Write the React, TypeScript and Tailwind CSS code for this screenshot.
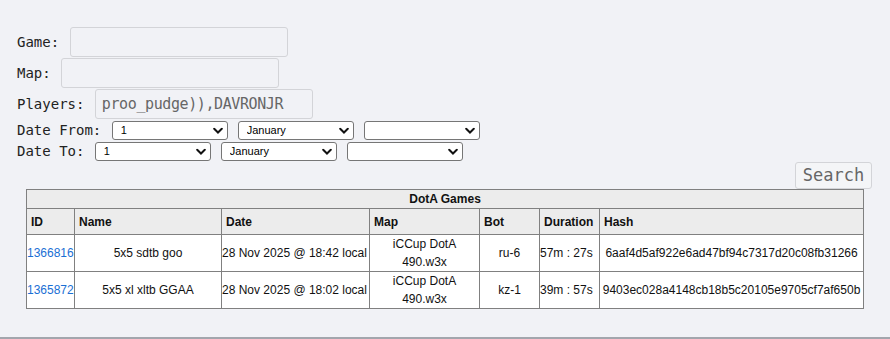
const mono = "font-['DejaVu_Sans_Mono',monospace]";
const arial = "font-['Liberation_Sans',Arial,sans-serif]";

const days = Array.from({ length: 31 }, (_, i) => String(i + 1));
const months = [
  "January", "February", "March", "April", "May", "June",
  "July", "August", "September", "October", "November", "December",
];

const games = [
  {
    id: "1366816",
    name: "5x5 sdtb goo",
    date: "28 Nov 2025 @ 18:42 local",
    map: ["iCCup DotA", "490.w3x"],
    bot: "ru-6",
    duration: "57m : 27s",
    hash: "6aaf4d5af922e6ad47bf94c7317d20c08fb31266",
  },
  {
    id: "1365872",
    name: "5x5 xl xltb GGAA",
    date: "28 Nov 2025 @ 18:02 local",
    map: ["iCCup DotA", "490.w3x"],
    bot: "kz-1",
    duration: "39m : 57s",
    hash: "9403ec028a4148cb18b5c20105e9705cf7af650b",
  },
];

const Chevron = () => (
  <svg
    className="pointer-events-none absolute right-[5px] top-1/2 -translate-y-1/2"
    width="10"
    height="7"
    viewBox="0 0 10 7"
  >
    <path d="M1.2 1.3 L5 5 L8.8 1.3" fill="none" stroke="#111" strokeWidth="2" strokeLinecap="round" />
  </svg>
);

const Select = ({ options, value }: { options: string[]; value?: string }) => (
  <div className="relative ml-[2px] mr-[8px] inline-flex w-[116px]">
    <select
      defaultValue={value ?? ""}
      className={`${arial} h-[19px] w-full appearance-none rounded-[3px] border border-[#767676] bg-white pl-[8px] text-[11px] leading-[17px] text-black`}
    >
      {value === undefined && <option value=""></option>}
      {options.map((o) => (
        <option key={o}>{o}</option>
      ))}
    </select>
    <Chevron />
  </div>
);

const TextField = ({ value }: { value?: string }) => (
  <input
    defaultValue={value}
    className={`${mono} ml-[2px] h-[30px] w-[218px] rounded-[3px] border border-[#d3d4d8] bg-[#f1f2f6] px-[6px] py-0 text-[15px] leading-[28px] tracking-[-0.4px] text-[#666] outline-none`}
  />
);

export default function App() {
  return (
    <div className={`${mono} h-[339px] border-b-2 border-[#a3a6ad] bg-[#f1f2f6] text-[14px] text-[#222]`}>
      <div className="px-[17px] pt-[27px]">
        <div className="flex h-[31px] items-start">
          <span className="whitespace-pre leading-[30px]">Game: </span>
          <TextField />
        </div>
        <div className="flex h-[31px] items-start">
          <span className="whitespace-pre leading-[30px]">Map: </span>
          <TextField />
        </div>
        <div className="flex h-[31px] items-start">
          <span className="whitespace-pre leading-[30px]">Players: </span>
          <TextField value="proo_pudge)),DAVRONJR" />
        </div>
        <div className="flex h-[21px] items-center">
          <span className="whitespace-pre">Date From: </span>
          <Select options={days} value="1" />
          <Select options={months} value="January" />
          <Select options={[]} />
        </div>
        <div className="flex h-[21px] items-center">
          <span className="whitespace-pre">Date To: </span>
          <Select options={days} value="1" />
          <Select options={months} value="January" />
          <Select options={[]} />
        </div>
      </div>
      <div className="flex justify-end pr-[18px]">
        <button className="h-[27px] w-[77px] rounded-[3px] border border-[#d3d4d8] bg-[#f4f5f7] text-[17px] text-[#666]">
          Search
        </button>
      </div>
      <div className="pl-[26px]">
        <table className={`${arial} w-[837px] table-fixed border-collapse border border-[#808080] text-[12px] text-[#111]`}>
          <colgroup>
            <col className="w-[48px]" />
            <col className="w-[147px]" />
            <col className="w-[148px]" />
            <col className="w-[110px]" />
            <col className="w-[60px]" />
            <col className="w-[60px]" />
            <col className="w-[264px]" />
          </colgroup>
          <thead>
            <tr className="h-[19px] bg-[#ececec]">
              <th colSpan={7} className="border border-[#808080] p-0 text-center font-bold leading-[17px]">
                DotA Games
              </th>
            </tr>
            <tr className="h-[26px] bg-[#ececec]">
              {["ID", "Name", "Date", "Map", "Bot", "Duration", "Hash"].map((h) => (
                <th key={h} className="border border-[#808080] px-[4px] py-0 text-left font-bold">
                  {h}
                </th>
              ))}
            </tr>
          </thead>
          <tbody>
            {games.map((g) => (
              <tr key={g.id} className="h-[37px] bg-white leading-[18px]">
                <td className="border border-[#808080] p-0 text-left">
                  <a href="#" className="text-[#1a6fd4]">{g.id}</a>
                </td>
                <td className="border border-[#808080] p-0 text-center">{g.name}</td>
                <td className="border border-[#808080] p-0 text-left whitespace-nowrap">{g.date}</td>
                <td className="border border-[#808080] p-0 text-center">
                  {g.map[0]}
                  <br />
                  {g.map[1]}
                </td>
                <td className="border border-[#808080] p-0 text-center">{g.bot}</td>
                <td className="border border-[#808080] p-0 text-left whitespace-nowrap">{g.duration}</td>
                <td className="border border-[#808080] p-0 text-center whitespace-nowrap">{g.hash}</td>
              </tr>
            ))}
          </tbody>
        </table>
      </div>
    </div>
  );
}
